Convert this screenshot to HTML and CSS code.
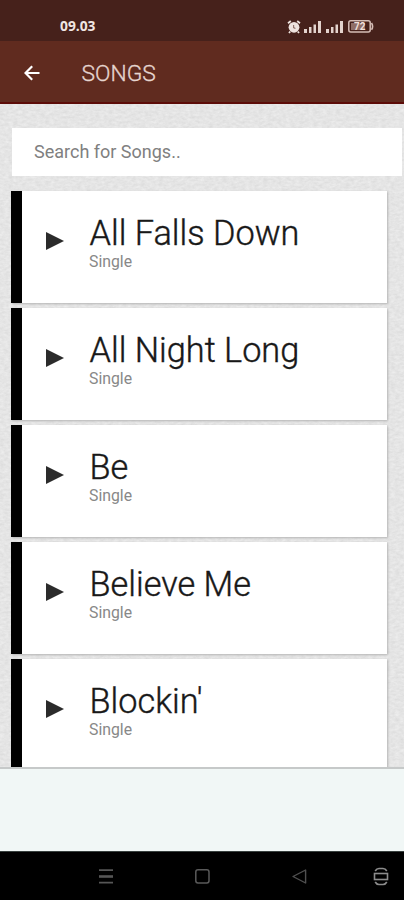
FILE: index.html
```html
<!DOCTYPE html>
<html lang="en">
<head>
  <meta charset="UTF-8">
  <meta name="viewport" content="width=device-width, initial-scale=1">
  <title>Songs</title>
  <link rel="stylesheet" href="styles.css">
</head>
<body>
  <div class="status-bar">
    <span class="clock">09.03</span>
    <div class="status-icons">
      <svg class="alarm" width="14" height="14" viewBox="0 0 14 14">
        <path d="M1 3.2 3.8 1M13 3.2 10.2 1M3.2 11.5 2 13M10.8 11.5 12 13" stroke="#eee3de" stroke-width="1.8"/>
        <circle cx="7" cy="7.3" r="5.4" fill="#eee3de"/>
        <path d="M6.6 5v2.6l1.8 1" fill="none" stroke="#8d6e66" stroke-width="1.1"/>
      </svg>
      <svg class="signal" width="17" height="12" viewBox="0 0 17 12" fill="#e3d3cd">
        <path d="M0 8h3v4H0zM5 6h2.5v6H5zM9.5 3.5H12V12H9.5zM14 0h3v12h-3z"/>
      </svg>
      <svg class="signal" width="17" height="12" viewBox="0 0 17 12" fill="#e3d3cd">
        <path d="M0 8h3v4H0zM5 6h2.5v6H5zM9.5 3.5H12V12H9.5zM14 0h3v12h-3z"/>
      </svg>
      <div class="battery">
        <svg width="26" height="13" viewBox="0 0 26 13">
          <rect x=".8" y=".8" width="21.4" height="11.2" rx="2" fill="none" stroke="#d5bdb6" stroke-width="1.5"/>
          <rect x="3" y="3" width="14" height="7" fill="#8f6e67"/>
          <path d="M23.5 3q2.2 3.4 0 6.8" fill="none" stroke="#d5bdb6" stroke-width="1.6"/>
        </svg>
        <span>72</span>
      </div>
    </div>
  </div>

  <header class="app-bar">
    <svg width="16" height="16" viewBox="0 0 16 16" fill="none" stroke="#fff" stroke-width="2.2">
      <path d="M15.5 8H2M8.2 1.2 1.5 8l6.7 6.8"/>
    </svg>
    <h1>SONGS</h1>
  </header>

  <main class="content">
    <svg class="paper" width="404" height="663">
      <filter id="grain" x="0" y="0" width="100%" height="100%" color-interpolation-filters="sRGB">
        <feTurbulence type="fractalNoise" baseFrequency="0.22 0.4" numOctaves="3" seed="4"/>
        <feColorMatrix type="matrix" values=".09 0 0 0 .852  .09 0 0 0 .852  .09 0 0 0 .852  0 0 0 0 1"/>
      </filter>
      <rect width="404" height="663" filter="url(#grain)"/>
    </svg>
    <input class="search" type="text" placeholder="Search for Songs..">
    <div class="song-list">
      <div class="song">
        <svg class="play" width="18" height="18" viewBox="0 0 18 18"><path d="M0 0 18 9 0 18z"/></svg>
        <div class="song-info">
          <h2>All Falls Down</h2>
          <p>Single</p>
        </div>
      </div>
      <div class="song">
        <svg class="play" width="18" height="18" viewBox="0 0 18 18"><path d="M0 0 18 9 0 18z"/></svg>
        <div class="song-info">
          <h2>All Night Long</h2>
          <p>Single</p>
        </div>
      </div>
      <div class="song">
        <svg class="play" width="18" height="18" viewBox="0 0 18 18"><path d="M0 0 18 9 0 18z"/></svg>
        <div class="song-info">
          <h2>Be</h2>
          <p>Single</p>
        </div>
      </div>
      <div class="song">
        <svg class="play" width="18" height="18" viewBox="0 0 18 18"><path d="M0 0 18 9 0 18z"/></svg>
        <div class="song-info">
          <h2>Believe Me</h2>
          <p>Single</p>
        </div>
      </div>
      <div class="song">
        <svg class="play" width="18" height="18" viewBox="0 0 18 18"><path d="M0 0 18 9 0 18z"/></svg>
        <div class="song-info">
          <h2>Blockin'</h2>
          <p>Single</p>
        </div>
      </div>
    </div>
  </main>

  <div class="ad-banner"></div>

  <nav class="nav-bar">
    <svg width="14" height="15" viewBox="0 0 14 15" fill="none" stroke="#565656">
      <path d="M0 1.2h14M0 13.7h14" stroke-width="1.8"/>
      <path d="M0 7.5h14" stroke-width="2.6"/>
    </svg>
    <svg width="15" height="15" viewBox="0 0 15 15" fill="none" stroke="#5a5a5a" stroke-width="1.5">
      <rect x=".8" y=".8" width="13.2" height="13.2" rx="2.2"/>
    </svg>
    <svg width="15" height="15" viewBox="0 0 15 15" fill="none" stroke="#505050" stroke-width="1.4" stroke-linejoin="round">
      <path d="M13.6 1v13L1 7.5z"/>
    </svg>
    <svg class="rotate" width="16" height="19" viewBox="0 0 16 19" fill="none" stroke="#8c8c8c" stroke-width="1.6">
      <rect x="1.5" y="6.5" width="13" height="6"/>
      <path d="M2.2 4Q3.6 1.500 6 1.500H10Q12.400 1.500 13.800 4M2.200 15Q3.600 17.500 6 17.500H10Q12.400 17.500 13.800 15"/>
    </svg>
  </nav>
</body>
</html>
```
FILE: styles.css
```css
* {
  box-sizing: border-box;
}

body {
  margin: 0;
  height: 900px;
  display: flex;
  flex-direction: column;
  overflow: hidden;
  font-family: Roboto, "Liberation Sans", sans-serif;
  background: #000;
}

.status-bar {
  flex: none;
  height: 41px;
  background: #46211b;
  display: flex;
  align-items: center;
  justify-content: space-between;
  padding: 12px 30px 0 60px;
}

.clock {
  margin-top: -2px;
  font-family: "Open Sans", sans-serif;
  font-size: 13.8px;
  font-weight: 700;
  line-height: 14px;
  color: #f0e6e2;
}

.status-icons {
  display: flex;
  align-items: center;
}

.alarm {
  margin-right: 3px;
}

.signal {
  margin-right: 5px;
}

.battery {
  position: relative;
  display: flex;
}

.battery span {
  position: absolute;
  left: 6px;
  top: 1px;
  font-size: 10px;
  line-height: 12px;
  font-weight: 700;
  color: #f0dfd9;
}

.app-bar {
  flex: none;
  height: 63px;
  background: #602b1f;
  border-bottom: 2px solid #5c0c08;
  display: flex;
  align-items: center;
  padding: 2px 24px 0;
}

.app-bar h1 {
  margin: 3px 0 0 41.5px;
  font-size: 22.8px;
  line-height: 28px;
  font-weight: 300;
  -webkit-text-stroke: 0.3px;
  color: #e6d6d0;
}

.content {
  position: relative;
  flex: none;
  height: 663px;
  padding: 24px 2px 0 11px;
  overflow: hidden;
  background: #e4e4e4;
}

.paper {
  position: absolute;
  left: 0;
  top: 0;
}

.search {
  position: relative;
  display: block;
  width: 390px;
  height: 48px;
  margin-left: 1px;
  padding: 0 22px 1px;
  border: none;
  background: #fff;
  font-family: inherit;
  font-size: 18px;
  color: #333;
}

.search::placeholder {
  color: #808080;
}

.song-list {
  position: relative;
  display: flex;
  flex-direction: column;
  gap: 5px;
  margin-top: 15px;
  width: 376px;
}

.song {
  flex: none;
  height: 112px;
  display: flex;
  align-items: flex-start;
  background: #fff;
  border-left: 11px solid #000;
  padding: 21px 0 0 24px;
  box-shadow: 1px 1px 2px #b5b5b5;
}

.play {
  margin-top: 20px;
  fill: #2b2b2b;
}

.song-info {
  margin-left: 25px;
}

.song h2 {
  margin: 0 0 0 0.5px;
  font-size: 34.3px;
  line-height: 42px;
  font-weight: 300;
  -webkit-text-stroke: 0.4px;
  color: #181818;
}

.song p {
  margin: -1px 0 0;
  font-size: 15.8px;
  line-height: 17px;
  color: #888;
}

.ad-banner {
  flex: none;
  height: 84px;
  background: #f1f7f6;
  border-top: 2px solid #c6c9c9;
}

.nav-bar {
  flex: none;
  height: 49px;
  background: #000;
  border-top: 1px solid #38403e;
  display: flex;
  align-items: center;
  gap: 82px;
  padding-left: 99px;
}

.rotate {
  margin-left: -16px;
}
```
